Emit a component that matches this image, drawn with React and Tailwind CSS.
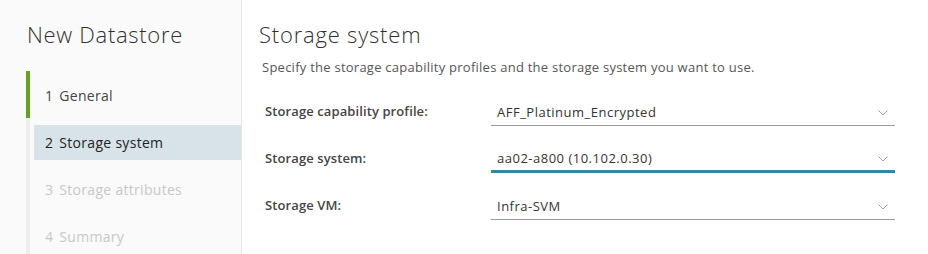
import React from 'react';

function Chevron() {
  return (
    <svg width="12" height="8" viewBox="0 0 12 8" className="text-gray-400">
      <path d="M1.5 1.5 L6 6 L10.5 1.5" fill="none" stroke="currentColor" strokeWidth="1" />
    </svg>
  );
}

function SelectField({ label, value, active }) {
  return (
    <div className="flex items-end h-[47px]">
      <div className="w-[226px] pb-[4px] text-[13px] font-semibold tracking-[0.1px] text-[#454545]">{label}</div>
      <div
        className={
          'flex items-center justify-between w-[404px] pl-[6px] pr-[6px] ' +
          (active ? 'pb-[1px] border-b-[3px] border-[#2b8ca0]' : 'pb-[2px] border-b border-[#9a9a9a]')
        }
      >
        <span className="text-[13px] tracking-[0.5px] text-[#333]">{value}</span>
        <Chevron />
      </div>
    </div>
  );
}

const steps = [
  { n: 1, label: 'General', state: 'done' },
  { n: 2, label: 'Storage system', state: 'current' },
  { n: 3, label: 'Storage attributes', state: 'todo' },
  { n: 4, label: 'Summary', state: 'todo' },
];

export default function App() {
  return (
    <div className="flex w-[928px] h-[254px] overflow-hidden bg-white font-['Open_Sans',sans-serif]">
      <div className="w-[242px] shrink-0 bg-[#fafafa] border-r border-[#e6e6e6] pt-[19px]">
        <h1 className="pl-[27px] text-[22px] font-light tracking-[0.7px] text-[#313131] leading-[30px]">New Datastore</h1>
        <div className="mt-[22px] ml-[26px] border-l-[4px] border-[#eeeeee]">
          {steps.map((s) => (
            <div key={s.n} className="relative h-[47px] flex items-center pt-[2px]">
              {s.state === 'done' && <div className="absolute -left-[4px] top-0 bottom-0 w-[4px] bg-[#62a420]" />}
              <div
                className={
                  'flex items-center h-[35px] w-full ml-[4px] pl-[11px] text-[14px] tracking-[0.3px] ' +
                  (s.state === 'current'
                    ? 'bg-[#d8e3e9] text-[#222]'
                    : s.state === 'done'
                    ? 'text-[#454545]'
                    : 'text-[#c8c8c8]')
                }
              >
                <span className="mr-[6px]">{s.n}</span>
                {s.label}
              </div>
            </div>
          ))}
        </div>
      </div>
      <div className="flex-1 pl-[17px] pt-[19px]">
        <h2 className="text-[22px] font-light tracking-[0.8px] text-[#313131] leading-[30px]">Storage system</h2>
        <p className="mt-[9px] ml-[3px] text-[13px] tracking-[0.25px] text-[#565656]">
          Specify the storage capability profiles and the storage system you want to use.
        </p>
        <div className="ml-[6px] mt-[1px]">
          <SelectField label="Storage capability profile:" value="AFF_Platinum_Encrypted" />
          <SelectField label="Storage system:" value="aa02-a800 (10.102.0.30)" active />
          <SelectField label="Storage VM:" value="Infra-SVM" />
        </div>
      </div>
    </div>
  );
}
